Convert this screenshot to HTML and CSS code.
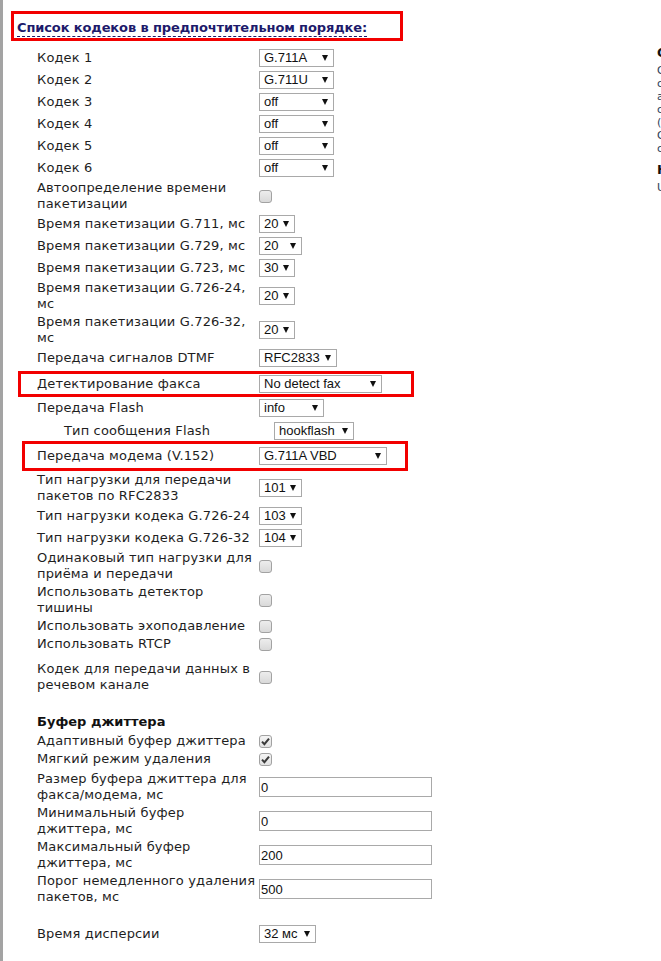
FILE: index.html
```html
<!DOCTYPE html>
<html lang="ru">
<head>
<meta charset="utf-8">
<title>Кодеки</title>
<link rel="stylesheet" href="styles.css">
</head>
<body>
<div class="page">
  <main class="main">
    <div class="title-box"><span class="title">Список кодеков в предпочтительном порядке:</span></div>

    <div class="rows">
      <div class="row"><div class="lbl">Кодек 1</div><div class="ctl"><span class="sel w75"><select><option>G.711A</option></select></span></div></div>
      <div class="row"><div class="lbl">Кодек 2</div><div class="ctl"><span class="sel w75"><select><option>G.711U</option></select></span></div></div>
      <div class="row"><div class="lbl">Кодек 3</div><div class="ctl"><span class="sel w75"><select><option>off</option></select></span></div></div>
      <div class="row"><div class="lbl">Кодек 4</div><div class="ctl"><span class="sel w75"><select><option>off</option></select></span></div></div>
      <div class="row"><div class="lbl">Кодек 5</div><div class="ctl"><span class="sel w75"><select><option>off</option></select></span></div></div>
      <div class="row"><div class="lbl">Кодек 6</div><div class="ctl"><span class="sel w75"><select><option>off</option></select></span></div></div>
      <div class="row"><div class="lbl">Автоопределение времени<br>пакетизации</div><div class="ctl"><span class="cb"></span></div></div>
      <div class="row"><div class="lbl">Время пакетизации G.711, мс</div><div class="ctl"><span class="sel w36"><select><option>20</option></select></span></div></div>
      <div class="row"><div class="lbl">Время пакетизации G.729, мс</div><div class="ctl"><span class="sel w43"><select><option>20</option></select></span></div></div>
      <div class="row"><div class="lbl">Время пакетизации G.723, мс</div><div class="ctl"><span class="sel w36"><select><option>30</option></select></span></div></div>
      <div class="row"><div class="lbl">Время пакетизации G.726-24,<br>мс</div><div class="ctl"><span class="sel w36"><select><option>20</option></select></span></div></div>
      <div class="row"><div class="lbl">Время пакетизации G.726-32,<br>мс</div><div class="ctl"><span class="sel w36"><select><option>20</option></select></span></div></div>
      <div class="row"><div class="lbl">Передача сигналов DTMF</div><div class="ctl"><span class="sel w78"><select><option>RFC2833</option></select></span></div></div>

      <div class="row hl hl-fax"><div class="lbl">Детектирование факса</div><div class="ctl"><span class="sel w122"><select><option>No detect fax</option></select></span></div></div>

      <div class="row"><div class="lbl">Передача Flash</div><div class="ctl"><span class="sel w65"><select><option>info</option></select></span></div></div>
      <div class="row sub"><div class="lbl">Тип сообщения Flash</div><div class="ctl"><span class="sel w80"><select><option>hookflash</option></select></span></div></div>

      <div class="row hl hl-modem"><div class="lbl">Передача модема (V.152)</div><div class="ctl"><span class="sel w127"><select><option>G.711A VBD</option></select></span></div></div>

      <div class="row"><div class="lbl">Тип нагрузки для передачи<br>пакетов по RFC2833</div><div class="ctl"><span class="sel w43"><select><option>101</option></select></span></div></div>
      <div class="row"><div class="lbl">Тип нагрузки кодека G.726-24</div><div class="ctl"><span class="sel w43"><select><option>103</option></select></span></div></div>
      <div class="row"><div class="lbl">Тип нагрузки кодека G.726-32</div><div class="ctl"><span class="sel w43"><select><option>104</option></select></span></div></div>
      <div class="row"><div class="lbl">Одинаковый тип нагрузки для<br>приёма и передачи</div><div class="ctl"><span class="cb"></span></div></div>
      <div class="row"><div class="lbl">Использовать детектор<br>тишины</div><div class="ctl"><span class="cb"></span></div></div>
      <div class="row cbrow"><div class="lbl">Использовать эхоподавление</div><div class="ctl"><span class="cb"></span></div></div>
      <div class="row cbrow"><div class="lbl">Использовать RTCP</div><div class="ctl"><span class="cb"></span></div></div>
      <div class="row gap-data"><div class="lbl">Кодек для передачи данных в<br>речевом канале</div><div class="ctl"><span class="cb"></span></div></div>
    </div>

    <h3 class="section">Буфер джиттера</h3>

    <div class="rows">
      <div class="row cbrow first"><div class="lbl">Адаптивный буфер джиттера</div><div class="ctl"><span class="cb on"><svg viewBox="0 0 13 13" width="13" height="13"><path d="M3 6.6 L5.4 9.2 L10 3.6" fill="none" stroke="#3a3a3a" stroke-width="2"/></svg></span></div></div>
      <div class="row cbrow"><div class="lbl">Мягкий режим удаления</div><div class="ctl"><span class="cb on"><svg viewBox="0 0 13 13" width="13" height="13"><path d="M3 6.6 L5.4 9.2 L10 3.6" fill="none" stroke="#3a3a3a" stroke-width="2"/></svg></span></div></div>
      <div class="row first"><div class="lbl">Размер буфера джиттера для<br>факса/модема, мс</div><div class="ctl"><input class="txt" type="text" value="0"></div></div>
      <div class="row"><div class="lbl">Минимальный буфер<br>джиттера, мс</div><div class="ctl"><input class="txt" type="text" value="0"></div></div>
      <div class="row"><div class="lbl">Максимальный буфер<br>джиттера, мс</div><div class="ctl"><input class="txt" type="text" value="200"></div></div>
      <div class="row"><div class="lbl">Порог немедленного удаления<br>пакетов, мс</div><div class="ctl"><input class="txt" type="text" value="500"></div></div>
      <div class="row disp"><div class="lbl">Время дисперсии</div><div class="ctl"><span class="sel w56"><select><option>32 мс</option></select></span></div></div>
    </div>
  </main>

  <aside class="help">
    <h4>Описание</h4>
    <p>Список кодеков, используемых<br>согласно порядку приоритета<br>абонентского устройства. Кодек<br>с наивысшим приоритетом<br>(Кодек 1) предлагается первым.<br>Свободные позиции отмечаются<br>словом off.</p>
    <h4>Настройки</h4>
    <p>Use default values if unsure.</p>
  </aside>
</div>
</body>
</html>
```

FILE: styles.css
```css
html, body {
  margin: 0;
  padding: 0;
  background: #fff;
  overflow: hidden;
}

body {
  font-family: "DejaVu Sans", Verdana, sans-serif;
  font-size: 13px;
  line-height: 16px;
  color: #1e1e1e;
}

.page {
  display: flex;
  width: 1000px;
  min-height: 961px;
  border-left: 3px solid #a3a3a3;
}

.main {
  flex: none;
  width: 654px;
  box-sizing: border-box;
  padding-left: 34px;
}

.title-box {
  margin: 11px 0 0 -26px;
  width: 392px;
  height: 30px;
  box-sizing: border-box;
  border: 3px solid #f20000;
  padding: 6px 0 0 3px;
}

.title {
  display: inline-block;
  font-weight: bold;
  color: #1d1a6b;
  border-bottom: 1px dashed #1d1a6b;
  line-height: 16px;
  letter-spacing: -0.12px;
  white-space: nowrap;
}

.rows {
  display: flex;
  flex-direction: column;
}

.title-box + .rows {
  margin-top: 6px;
}

.row {
  display: flex;
  align-items: center;
  min-height: 20px;
  padding: 1px 0;
}

.row.cbrow {
  min-height: 16px;
}

.lbl {
  flex: none;
  width: 222px;
  white-space: nowrap;
  letter-spacing: 0.15px;
}

.ctl {
  display: flex;
  align-items: center;
}

.sub {
  padding: 2px 0 0;
}

.sub .lbl {
  width: 195px;
  padding-left: 27px;
}

.sub .ctl {
  margin-left: 15px;
}

.hl {
  border: 3px solid #f20000;
  box-sizing: border-box;
}

.hl-fax {
  margin: 2px 0 0 -19px;
  padding: 0 0 0 16px;
  width: 396px;
  height: 26px;
}

.hl-modem {
  margin-left: -15px;
  padding: 2px 0 2px 12px;
  width: 386px;
  height: 30px;
}

.gap-data {
  margin-top: 7px;
}

.section {
  margin: 20px 0 0;
  font-size: 13px;
  line-height: 16px;
  font-weight: bold;
  color: #111;
}

.first {
  margin-top: 2px;
}

.disp {
  margin-top: 17px;
}

/* selects */
.sel {
  position: relative;
  display: inline-block;
  height: 18px;
}

.sel select {
  -webkit-appearance: none;
  appearance: none;
  display: block;
  width: 100%;
  height: 18px;
  box-sizing: border-box;
  margin: 0;
  padding: 0 0 0 4px;
  border: 1px solid #a9a9a9;
  border-radius: 0;
  background: #fff;
  color: #111;
  font-family: "Liberation Sans", Arial, sans-serif;
  font-size: 13px;
  line-height: 16px;
}

.sel::after {
  content: "";
  position: absolute;
  right: 6px;
  top: 6px;
  width: 0;
  height: 0;
  border-left: 3px solid transparent;
  border-right: 3px solid transparent;
  border-top: 6px solid #111;
  pointer-events: none;
}

.w36 { width: 36px; }
.w43 { width: 43px; }
.w56 { width: 57px; }
.w65 { width: 65px; }
.w75 { width: 75px; }
.w78 { width: 78px; }
.w80 { width: 80px; }
.w122 { width: 123px; }
.w127 { width: 128px; }

/* checkboxes */
.cb {
  display: block;
  width: 13px;
  height: 13px;
  box-sizing: border-box;
  border: 1px solid #a2a2a2;
  border-radius: 3px;
  background: linear-gradient(#ededed, #d9d9d9);
  position: relative;
}

.cb.on {
  background: linear-gradient(#f4f4f4, #e2e2e2);
}

.cb svg {
  position: absolute;
  left: -1px;
  top: -1px;
}

/* text inputs */
.txt {
  display: block;
  width: 173px;
  height: 20px;
  box-sizing: border-box;
  margin: 0;
  padding: 0 0 0 1px;
  border: 1px solid #a9a9a9;
  font-family: "Liberation Sans", Arial, sans-serif;
  font-size: 13px;
  color: #111;
  background: #fff;
}

/* help column */
.help {
  flex: none;
  width: 300px;
  padding-top: 45px;
  color: #2c3e57;
  font-size: 11px;
  line-height: 13px;
}

.help h4 {
  margin: 0 0 3px;
  font-size: 13px;
  line-height: 16px;
  color: #111;
}

.help p {
  margin: 0 0 7px;
}
```
